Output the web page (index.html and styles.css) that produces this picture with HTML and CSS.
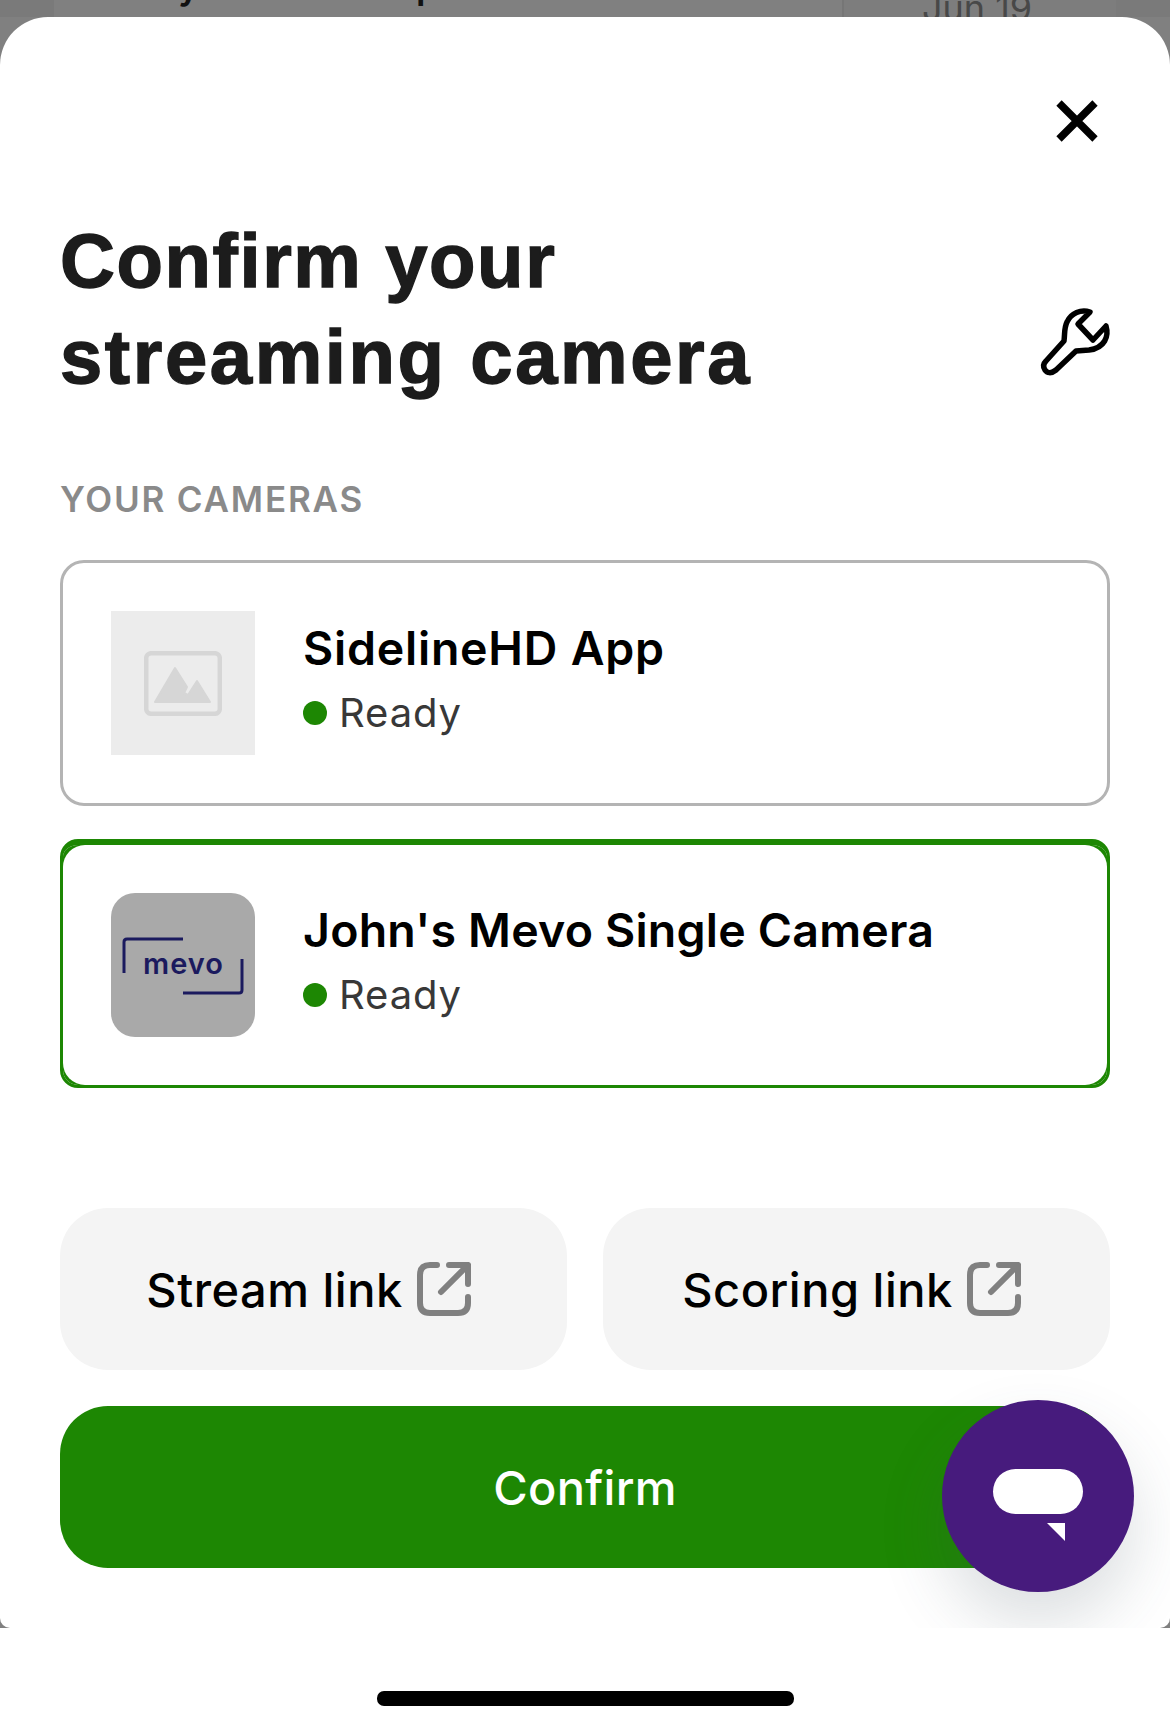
FILE: index.html
```html
<!DOCTYPE html>
<html lang="en">
<head>
<meta charset="utf-8">
<title>Confirm your streaming camera</title>
<link rel="stylesheet" href="styles.css">
</head>
<body>
<div class="backdrop">
  <span class="bd-side bd-side-l"></span>
  <span class="bd-side bd-side-r"></span>
  <span class="bd-cell"></span>
  <span class="bd-text bd-g">y</span>
  <span class="bd-text bd-p">p</span>
  <span class="bd-text bd-date">Jun 19</span>
</div>
<main class="sheet">
  <div class="close-row">
    <button class="icon-btn" aria-label="Close">
      <svg width="42" height="42" viewBox="0 0 42 42"><path d="M3 3 L39 39 M39 3 L3 39" fill="none" stroke="#000" stroke-width="7.5"/></svg>
    </button>
  </div>
  <div class="title-row">
    <h1 class="title"><span class="title-a">Confirm your</span><br><span class="title-b">streaming camera</span></h1>
    <svg class="wrench" width="68" height="68" viewBox="0 0 68 68"><path d="M48 4 L36 16 L51 32 L64 18 C67 28 63 40 47 42 L34 43 L14 62 C9 66 5 65 3 62 C1 59 1 56 4 53 L22 33 C23 25 22 20 25 14 C29 5 39 1 48 4 Z" fill="none" stroke="#000" stroke-width="5.5" stroke-linejoin="round"/></svg>
  </div>
  <div class="section-label">YOUR CAMERAS</div>
  <section class="cameras">
    <article class="card">
      <div class="thumb thumb-empty">
        <svg width="78" height="65" viewBox="0 0 78 65"><rect x="2.2" y="2.2" width="73.6" height="60.6" rx="5" fill="none" stroke="#d6d6d6" stroke-width="4.5"/><path d="M11 51 L31 17 L43 36 L40 42 L44 44 L53 30 L66 51 Z" fill="#d6d6d6" stroke="#d6d6d6" stroke-width="2" stroke-linejoin="round"/></svg>
      </div>
      <div class="info">
        <div class="name name-short">SidelineHD App</div>
        <div class="status"><span class="dot"></span>Ready</div>
      </div>
    </article>
    <article class="card card-selected">
      <div class="thumb thumb-mevo">
        <svg width="144" height="144" viewBox="0 0 144 144"><path d="M13 80 V49 Q13 46 16 46 H72 M131 66 V97 Q131 100 128 100 H72" fill="none" stroke="#1b1a5e" stroke-width="3"/><text x="32" y="81" textLength="80" class="mevo">mevo</text></svg>
      </div>
      <div class="info">
        <div class="name">John's Mevo Single Camera</div>
        <div class="status"><span class="dot"></span>Ready</div>
      </div>
    </article>
  </section>
  <div class="links">
    <a class="link-btn">Stream link
      <svg width="54" height="54" viewBox="0 0 54 54"><path d="M20 3 H13 Q3 3 3 13 V41 Q3 51 13 51 H41 Q51 51 51 41 V35 M32 3 H51 V22 M51 3 L24 30" fill="none" stroke="#808080" stroke-width="6" stroke-linecap="round" stroke-linejoin="round"/></svg>
    </a>
    <a class="link-btn">Scoring link
      <svg width="54" height="54" viewBox="0 0 54 54"><path d="M20 3 H13 Q3 3 3 13 V41 Q3 51 13 51 H41 Q51 51 51 41 V35 M32 3 H51 V22 M51 3 L24 30" fill="none" stroke="#808080" stroke-width="6" stroke-linecap="round" stroke-linejoin="round"/></svg>
    </a>
  </div>
  <button class="confirm">Confirm</button>
  <button class="chat" aria-label="Chat">
    <span class="chat-bubble"></span>
    <svg class="chat-tail" width="18" height="18" viewBox="0 0 18 18"><path d="M0 0 H18 V18 Z" fill="#fff"/></svg>
  </button>
</main>
<footer class="home-bar"><span class="home-indicator"></span></footer>
</body>
</html>
```
FILE: styles.css
```css
* { box-sizing: border-box; }
html, body { margin: 0; padding: 0; }
body {
  width: 1170px;
  height: 1730px;
  background: #808080;
  font-family: "Inter", "Liberation Sans", sans-serif;
  overflow: hidden;
  display: flex;
  flex-direction: column;
}
.backdrop {
  height: 17px;
  flex: none;
  position: relative;
  overflow: hidden;
  background: #808080;
}
.bd-text { position: absolute; font-size: 36px; line-height: 44px; }
.bd-g { left: 178px; top: -36px; font-weight: 600; color: #111; }
.bd-p { left: 416px; top: -36px; font-weight: 600; color: #111; }
.bd-date { left: 922px; top: -14px; color: #484848; }
.bd-side { position: absolute; top: 0; bottom: 0; background: #7a7a7a; }
.bd-side-l { left: 0; width: 54px; }
.bd-side-r { right: 0; width: 54px; }
.bd-cell { position: absolute; left: 842px; top: 0; bottom: 0; width: 274px; border-left: 2px solid #767676; background: #7d7d7d; }
.sheet {
  flex: none;
  height: 1611px;
  background: #fff;
  border-radius: 48px 48px 10px 10px;
  padding: 0 60px;
  position: relative;
  overflow: hidden;
  display: flex;
  flex-direction: column;
}
.close-row { display: flex; justify-content: flex-end; padding: 83px 12px 0 0; height: 127px; flex: none; }
.icon-btn { border: 0; background: none; padding: 0; width: 42px; height: 42px; }
.icon-btn svg { display: block; }
.title-row { display: flex; justify-content: space-between; align-items: flex-start; margin-top: 69px; height: 192px; flex: none; }
.title {
  margin: 0;
  font-family: "Liberation Sans", Arial, sans-serif;
  font-size: 76px;
  line-height: 96px;
  font-weight: 700;
  -webkit-text-stroke: 1.4px #1c1c1c;
  color: #1c1c1c;
}
.title-a { letter-spacing: 1.6px; }
.title-b { letter-spacing: 2.6px; }
.wrench { margin-top: 95px; overflow: visible; }
.section-label {
  margin-top: 72px;
  font-size: 35px;
  line-height: 44px;
  font-weight: 600;
  color: #8a8a8a;
  letter-spacing: 1.8px;
}
.cameras { display: flex; flex-direction: column; gap: 33px; margin-top: 39px; }
.card {
  height: 246px;
  border: 3px solid #b4b4b4;
  border-radius: 24px;
  background: #fff;
  display: flex;
  align-items: center;
  padding: 0 48px;
  gap: 48px;
}
.card-selected {
  height: 249px;
  border: 3px solid #1d8703;
  border-top-width: 6px;
  border-radius: 18px;
  position: relative;
  overflow: hidden;
}
.card-selected::after {
  content: "";
  position: absolute;
  inset: 0;
  border-radius: 22px;
  box-shadow: 0 0 0 20px #1d8703;
  pointer-events: none;
}
.thumb { width: 144px; height: 144px; flex: none; display: flex; align-items: center; justify-content: center; }
.thumb-empty { background: #ececec; }
.thumb-mevo { background: #a9a9a9; border-radius: 24px; }
.mevo { font-family: "Inter", sans-serif; font-size: 29px; font-weight: 600; fill: #1b1a5e; }
.info { display: flex; flex-direction: column; gap: 13px; padding-bottom: 9px; }
.name { font-size: 46.5px; line-height: 56px; font-weight: 600; color: #000; letter-spacing: 0.2px; }
.name-short { letter-spacing: 0.77px; }
.status { display: flex; align-items: center; gap: 12px; font-size: 40px; line-height: 48px; color: #383838; letter-spacing: 0.9px; }
.dot { width: 24px; height: 24px; border-radius: 50%; background: #1d8703; flex: none; }
.links { display: flex; gap: 36px; margin-top: 120px; }
.link-btn {
  flex: 1;
  height: 162px;
  background: #f4f4f4;
  border-radius: 48px;
  display: flex;
  align-items: center;
  justify-content: center;
  gap: 14px;
  padding-right: 10px;
  font-size: 47px;
  letter-spacing: 0.5px;
  font-weight: 500;
  color: #000;
}
.confirm {
  flex: none;
  margin-top: 36px;
  height: 162px;
  border: 0;
  border-radius: 48px;
  background: #1d8703;
  color: #fff;
  font-family: inherit;
  font-size: 47px;
  letter-spacing: 0.3px;
  font-weight: 500;
}
.chat {
  position: absolute;
  left: 942px;
  top: 1383px;
  width: 192px;
  height: 192px;
  border: 0;
  padding: 0;
  border-radius: 50%;
  background: #471b7d;
  box-shadow: 0 32px 64px rgba(60, 80, 90, 0.18);
}
.chat-bubble {
  position: absolute;
  left: 51px;
  top: 69px;
  width: 90px;
  height: 45px;
  border-radius: 23px;
  background: #fff;
}
.chat-tail { position: absolute; left: 105px; top: 123px; }
.home-bar {
  flex: 1;
  background: #fff;
  display: flex;
  justify-content: center;
  padding-top: 63px;
  align-items: flex-start;
}
.home-indicator { width: 417px; height: 15px; border-radius: 7px; background: #000; }
```
